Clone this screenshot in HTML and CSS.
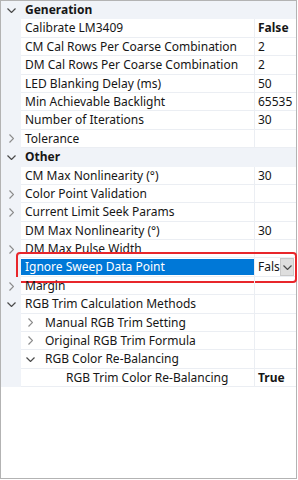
FILE: index.html
```html
<!DOCTYPE html>
<html>
<head>
<meta charset="utf-8">
<link rel="stylesheet" href="styles.css">
</head>
<body>
<div class="frame">
  <div class="grid">
    <div class="row cat"><span class="gutter"><svg class="chev down dark" viewBox="0 0 9 5"><path d="M0.5 0.5 L4.5 4.5 L8.5 0.5"/></svg></span><span class="label">Generation</span></div>
    <div class="row"><span class="gutter"></span><span class="label">Calibrate LM3409</span><span class="value b">False</span></div>
    <div class="row"><span class="gutter"></span><span class="label">CM Cal Rows Per Coarse Combination</span><span class="value">2</span></div>
    <div class="row"><span class="gutter"></span><span class="label">DM Cal Rows Per Coarse Combination</span><span class="value">2</span></div>
    <div class="row"><span class="gutter"></span><span class="label">LED Blanking Delay (ms)</span><span class="value">50</span></div>
    <div class="row"><span class="gutter"></span><span class="label">Min Achievable Backlight</span><span class="value">65535</span></div>
    <div class="row"><span class="gutter"></span><span class="label">Number of Iterations</span><span class="value">30</span></div>
    <div class="row"><span class="gutter"><svg class="chev right" viewBox="0 0 5 9"><path d="M0.5 0.5 L4.5 4.5 L0.5 8.5"/></svg></span><span class="label">Tolerance</span><span class="value"></span></div>
    <div class="row cat"><span class="gutter"><svg class="chev down dark" viewBox="0 0 9 5"><path d="M0.5 0.5 L4.5 4.5 L8.5 0.5"/></svg></span><span class="label">Other</span></div>
    <div class="row"><span class="gutter"></span><span class="label">CM Max Nonlinearity (°)</span><span class="value">30</span></div>
    <div class="row"><span class="gutter"><svg class="chev right" viewBox="0 0 5 9"><path d="M0.5 0.5 L4.5 4.5 L0.5 8.5"/></svg></span><span class="label">Color Point Validation</span><span class="value"></span></div>
    <div class="row"><span class="gutter"><svg class="chev right" viewBox="0 0 5 9"><path d="M0.5 0.5 L4.5 4.5 L0.5 8.5"/></svg></span><span class="label">Current Limit Seek Params</span><span class="value"></span></div>
    <div class="row"><span class="gutter"></span><span class="label">DM Max Nonlinearity (°)</span><span class="value">30</span></div>
    <div class="row"><span class="gutter"><svg class="chev right" viewBox="0 0 5 9"><path d="M0.5 0.5 L4.5 4.5 L0.5 8.5"/></svg></span><span class="label">DM Max Pulse Width</span><span class="value"></span></div>
    <div class="row sel"><span class="gutter"></span><span class="label"><span class="hl">Ignore Sweep Data Point</span></span><span class="value edit">False<span class="dd"><svg class="chev down dark" viewBox="0 0 9 5"><path d="M0.5 0.5 L4.5 4.5 L8.5 0.5"/></svg></span></span>
      <div class="callout"></div>
    </div>
    <div class="row"><span class="gutter"><svg class="chev right" viewBox="0 0 5 9"><path d="M0.5 0.5 L4.5 4.5 L0.5 8.5"/></svg></span><span class="label">Margin</span><span class="value"></span></div>
    <div class="row"><span class="gutter"><svg class="chev down dark" viewBox="0 0 9 5"><path d="M0.5 0.5 L4.5 4.5 L8.5 0.5"/></svg></span><span class="label">RGB Trim Calculation Methods</span><span class="value"></span></div>
    <div class="row"><span class="gutter"></span><span class="label l2"><svg class="chev right" viewBox="0 0 5 9"><path d="M0.5 0.5 L4.5 4.5 L0.5 8.5"/></svg>Manual RGB Trim Setting</span><span class="value"></span></div>
    <div class="row"><span class="gutter"></span><span class="label l2"><svg class="chev right" viewBox="0 0 5 9"><path d="M0.5 0.5 L4.5 4.5 L0.5 8.5"/></svg>Original RGB Trim Formula</span><span class="value"></span></div>
    <div class="row"><span class="gutter"></span><span class="label l2"><svg class="chev down dark" viewBox="0 0 9 5"><path d="M0.5 0.5 L4.5 4.5 L8.5 0.5"/></svg>RGB Color Re-Balancing</span><span class="value"></span></div>
    <div class="row"><span class="gutter"></span><span class="label l3">RGB Trim Color Re-Balancing</span><span class="value b">True</span></div>
  </div>
</div>
</body>
</html>
```
FILE: styles.css
```css
* { box-sizing: border-box; }
html, body { margin: 0; padding: 0; background: #fff; }
body {
  font-family: "Noto Sans", "Open Sans", sans-serif;
  font-size: 12px;
  color: #161616;
}
.frame {
  width: 297px;
  height: 479px;
  border: 1px solid #b3b3b3;
  background: #fff;
}
.grid {
  display: flex;
  flex-direction: column;
}
.row {
  position: relative;
  display: grid;
  grid-template-columns: 20px 233px 1fr;
  height: 18.4px;
  line-height: 17.4px;
}
.gutter {
  background: #f0f3f8;
  display: flex;
  align-items: center;
  justify-content: center;
}
.label {
  padding-left: 4px;
  white-space: nowrap;
  overflow: hidden;
  border-bottom: 1px solid #ebeef3;
  display: flex;
  align-items: center;
}
.value {
  border-left: 1px solid #ebeef3;
  border-bottom: 1px solid #ebeef3;
  padding-left: 3px;
  white-space: nowrap;
  overflow: hidden;
}
.b { font-weight: 700; }
.cat { background: #f0f3f8; grid-template-columns: 20px 1fr; }
.cat .label { font-weight: 700; border-bottom: 1px solid #f0f3f8; }
.chev { fill: none; stroke-width: 1.2; }
.chev.right { width: 5px; height: 9px; stroke: #8c8c8c; }
.chev.down { width: 9px; height: 5px; stroke: #8c8c8c; }
.chev.dark { stroke: #4a4a4a; }
.l2 { padding-left: 7px; }
.l2 .chev { margin-right: 12px; }
.l2 .chev.down { margin-right: 10px; margin-left: -2px; }
.l3 { padding-left: 45px; }
.sel .label { padding: 1px 0 1px 0; }
.hl {
  display: block;
  width: 100%;
  height: 100%;
  background: #0078d7;
  color: #fff;
  padding-left: 4px;
  line-height: 16px;
}
.edit {
  position: relative;
  overflow: visible;
}
.dd {
  position: absolute;
  top: 0;
  bottom: 0;
  right: 2px;
  width: 14px;
  background: #dedede;
  border: 1px solid #c8c8c8;
  display: flex;
  align-items: center;
  justify-content: center;
}
.callout {
  position: absolute;
  left: 15px;
  right: -1px;
  top: -6px;
  bottom: -6px;
  border: 2px solid #e8262b;
  border-radius: 4px;
  pointer-events: none;
}
```
